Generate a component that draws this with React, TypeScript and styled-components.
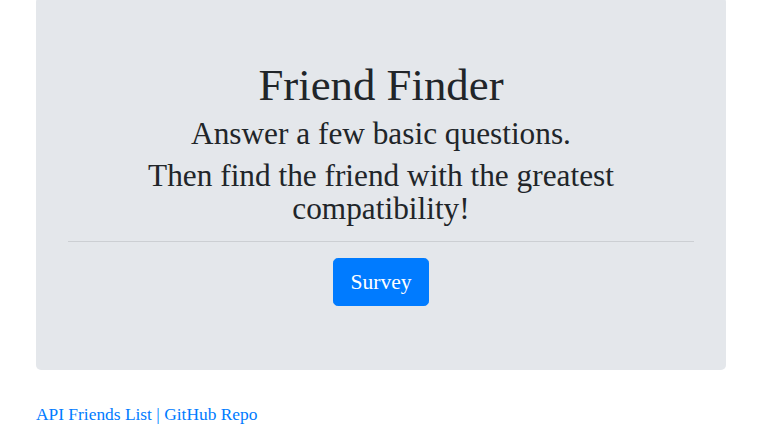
import React from "react";
import styled, { createGlobalStyle } from "styled-components";

const GlobalStyle = createGlobalStyle`
  html, body {
    margin: 0;
    padding: 0;
    background: #ffffff;
  }
  body {
    font-family: "Liberation Serif", "Times New Roman", serif;
    color: #212529;
    font-size: 17.4px;
    line-height: 24px;
  }
  * { box-sizing: border-box; }
`;

const Page = styled.div`
  padding-right: 12px;
`;

const Container = styled.div`
  max-width: 690px;
  margin: 0 auto;
`;

const Jumbotron = styled.section`
  margin-top: -3px;
  margin-bottom: 32px;
  padding: 64px 32px;
  background: #e4e7eb;
  border-radius: 5px;
  text-align: center;
`;

const Title = styled.h1`
  margin: 0 0 8px;
  font-size: 44.8px;
  line-height: 48px;
  font-weight: 400;
  color: #212529;
`;

const Subtitle = styled.h3`
  margin: 0 0 8px;
  font-size: 31.3px;
  line-height: 33.6px;
  font-weight: 400;
  color: #212529;
`;

const Rule = styled.hr`
  margin: 15px 0 16px;
  border: 0;
  border-top: 1px solid rgba(0, 0, 0, 0.1);
`;

const Button = styled.a`
  display: inline-block;
  padding: 8px 16px;
  border: 1px solid #007bff;
  border-radius: 4.8px;
  background: #007bff;
  color: #ffffff;
  font-size: 21.6px;
  line-height: 30px;
  text-decoration: none;
  cursor: pointer;
`;

const Footer = styled.p`
  margin: 0;
  color: #007bff;
  font-size: 17.4px;
  line-height: 24px;
`;

const FooterLink = styled.a`
  color: #007bff;
  text-decoration: none;
`;

export default function App() {
  return (
    <Page>
      <GlobalStyle />
      <Container>
        <Jumbotron>
          <Title>Friend Finder</Title>
          <Subtitle>Answer a few basic questions.</Subtitle>
          <Subtitle>Then find the friend with the greatest compatibility!</Subtitle>
          <Rule />
          <Button href="#survey">Survey</Button>
        </Jumbotron>
        <Footer>
          <FooterLink href="#api">API Friends List</FooterLink> |{" "}
          <FooterLink href="#github">GitHub Repo</FooterLink>
        </Footer>
      </Container>
    </Page>
  );
}
